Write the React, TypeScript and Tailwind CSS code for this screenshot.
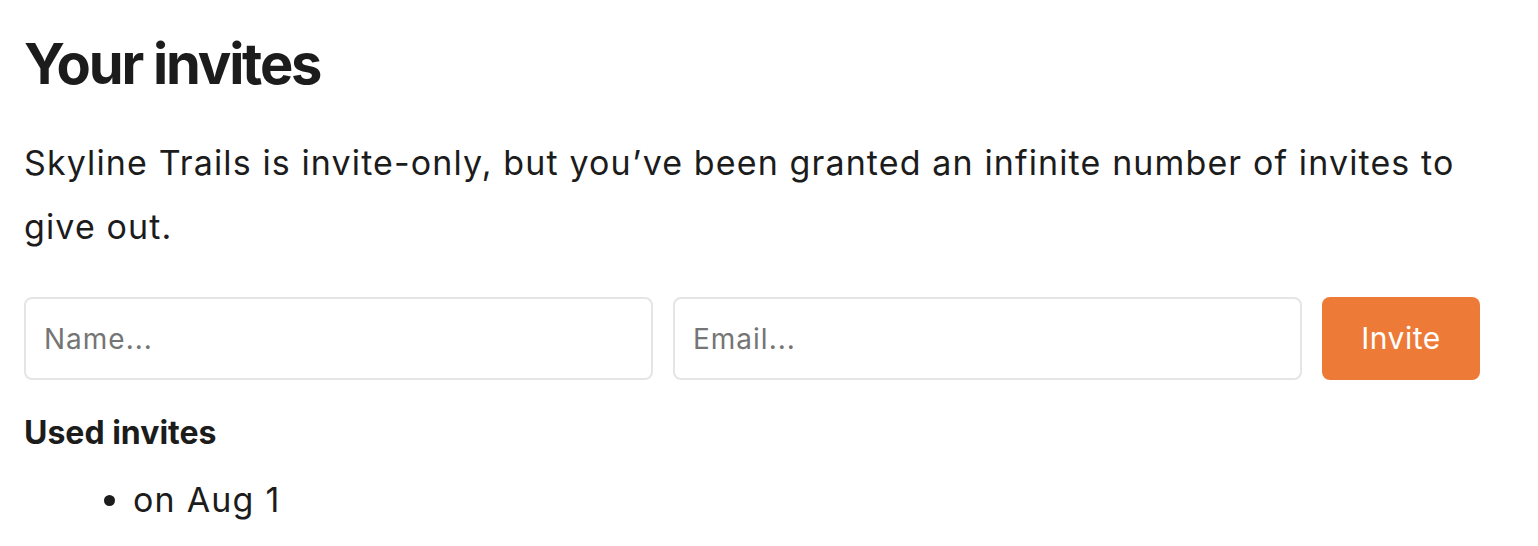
export default function App() {
  return (
    <div
      className="min-h-[546px] bg-white text-[#1c1c1c] px-6 pt-[32px]"
      style={{ fontFamily: "Inter, 'Noto Sans', sans-serif" }}
    >
      <div className="w-[1456px]">
        <h1 className="text-[56px] leading-[64px] font-bold tracking-[-2.2px]">Your invites</h1>
        <p className="mt-[35px] text-[34px] leading-[64px] tracking-[1.12px]">
          Skyline Trails is invite-only, but you’ve been granted an infinite number of invites to give out.
        </p>
        <form className="mt-[38px] flex gap-5" onSubmit={(e) => e.preventDefault()}>
          <input
            type="text"
            placeholder="Name..."
            className="flex-1 h-[83px] rounded-lg border-2 border-[#e5e5e5] px-[18px] text-[28px] tracking-[1px] placeholder:text-[#757575] outline-none"
          />
          <input
            type="email"
            placeholder="Email..."
            className="flex-1 h-[83px] rounded-lg border-2 border-[#e5e5e5] px-[18px] text-[28px] tracking-[1px] placeholder:text-[#757575] outline-none"
          />
          <button
            type="submit"
            className="w-[158px] h-[83px] rounded-lg bg-[#ee7a38] text-white text-[30px] tracking-[0.5px]"
          >
            Invite
          </button>
        </form>
        <h2 className="mt-[33px] text-[32px] leading-[40px] font-bold">Used invites</h2>
        <ul className="mt-[23px] list-disc pl-[109px] text-[34px] leading-[48px] tracking-[1.2px]">
          <li>on Aug 1</li>
        </ul>
      </div>
    </div>
  );
}
